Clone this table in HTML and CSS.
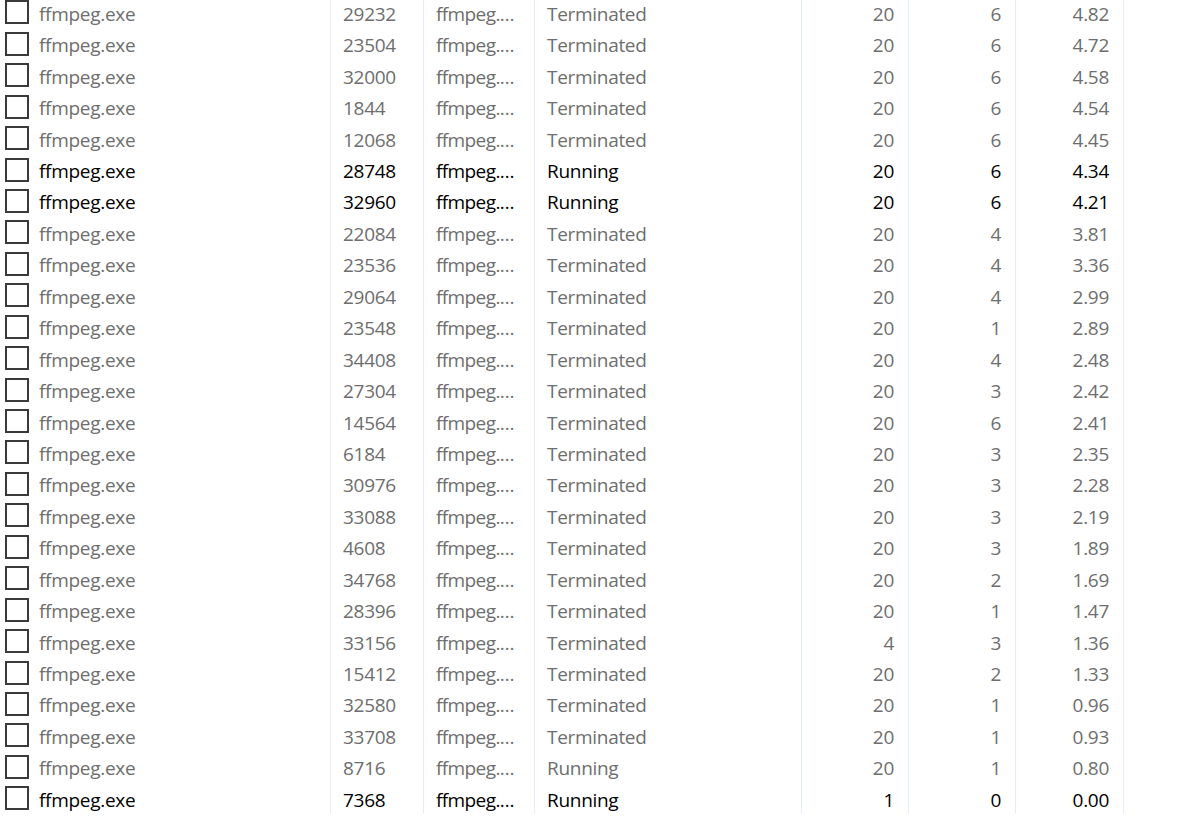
FILE: index.html
```html
<!DOCTYPE html>
<html lang="en">
<head>
<meta charset="utf-8">
<title>Processes</title>
<link rel="stylesheet" href="styles.css">
</head>
<body>
<div class="list">
  <div class="row dim"><div class="c name"><span class="box"></span><span>ffmpeg.exe</span></div><div class="c">29232</div><div class="c img">ffmpeg.…</div><div class="c">Terminated</div><div class="c r">20</div><div class="c r">6</div><div class="c r">4.82</div></div>
  <div class="row dim"><div class="c name"><span class="box"></span><span>ffmpeg.exe</span></div><div class="c">23504</div><div class="c img">ffmpeg.…</div><div class="c">Terminated</div><div class="c r">20</div><div class="c r">6</div><div class="c r">4.72</div></div>
  <div class="row dim"><div class="c name"><span class="box"></span><span>ffmpeg.exe</span></div><div class="c">32000</div><div class="c img">ffmpeg.…</div><div class="c">Terminated</div><div class="c r">20</div><div class="c r">6</div><div class="c r">4.58</div></div>
  <div class="row dim"><div class="c name"><span class="box"></span><span>ffmpeg.exe</span></div><div class="c">1844</div><div class="c img">ffmpeg.…</div><div class="c">Terminated</div><div class="c r">20</div><div class="c r">6</div><div class="c r">4.54</div></div>
  <div class="row dim"><div class="c name"><span class="box"></span><span>ffmpeg.exe</span></div><div class="c">12068</div><div class="c img">ffmpeg.…</div><div class="c">Terminated</div><div class="c r">20</div><div class="c r">6</div><div class="c r">4.45</div></div>
  <div class="row"><div class="c name"><span class="box"></span><span>ffmpeg.exe</span></div><div class="c">28748</div><div class="c img">ffmpeg.…</div><div class="c">Running</div><div class="c r">20</div><div class="c r">6</div><div class="c r">4.34</div></div>
  <div class="row"><div class="c name"><span class="box"></span><span>ffmpeg.exe</span></div><div class="c">32960</div><div class="c img">ffmpeg.…</div><div class="c">Running</div><div class="c r">20</div><div class="c r">6</div><div class="c r">4.21</div></div>
  <div class="row dim"><div class="c name"><span class="box"></span><span>ffmpeg.exe</span></div><div class="c">22084</div><div class="c img">ffmpeg.…</div><div class="c">Terminated</div><div class="c r">20</div><div class="c r">4</div><div class="c r">3.81</div></div>
  <div class="row dim"><div class="c name"><span class="box"></span><span>ffmpeg.exe</span></div><div class="c">23536</div><div class="c img">ffmpeg.…</div><div class="c">Terminated</div><div class="c r">20</div><div class="c r">4</div><div class="c r">3.36</div></div>
  <div class="row dim"><div class="c name"><span class="box"></span><span>ffmpeg.exe</span></div><div class="c">29064</div><div class="c img">ffmpeg.…</div><div class="c">Terminated</div><div class="c r">20</div><div class="c r">4</div><div class="c r">2.99</div></div>
  <div class="row dim"><div class="c name"><span class="box"></span><span>ffmpeg.exe</span></div><div class="c">23548</div><div class="c img">ffmpeg.…</div><div class="c">Terminated</div><div class="c r">20</div><div class="c r">1</div><div class="c r">2.89</div></div>
  <div class="row dim"><div class="c name"><span class="box"></span><span>ffmpeg.exe</span></div><div class="c">34408</div><div class="c img">ffmpeg.…</div><div class="c">Terminated</div><div class="c r">20</div><div class="c r">4</div><div class="c r">2.48</div></div>
  <div class="row dim"><div class="c name"><span class="box"></span><span>ffmpeg.exe</span></div><div class="c">27304</div><div class="c img">ffmpeg.…</div><div class="c">Terminated</div><div class="c r">20</div><div class="c r">3</div><div class="c r">2.42</div></div>
  <div class="row dim"><div class="c name"><span class="box"></span><span>ffmpeg.exe</span></div><div class="c">14564</div><div class="c img">ffmpeg.…</div><div class="c">Terminated</div><div class="c r">20</div><div class="c r">6</div><div class="c r">2.41</div></div>
  <div class="row dim"><div class="c name"><span class="box"></span><span>ffmpeg.exe</span></div><div class="c">6184</div><div class="c img">ffmpeg.…</div><div class="c">Terminated</div><div class="c r">20</div><div class="c r">3</div><div class="c r">2.35</div></div>
  <div class="row dim"><div class="c name"><span class="box"></span><span>ffmpeg.exe</span></div><div class="c">30976</div><div class="c img">ffmpeg.…</div><div class="c">Terminated</div><div class="c r">20</div><div class="c r">3</div><div class="c r">2.28</div></div>
  <div class="row dim"><div class="c name"><span class="box"></span><span>ffmpeg.exe</span></div><div class="c">33088</div><div class="c img">ffmpeg.…</div><div class="c">Terminated</div><div class="c r">20</div><div class="c r">3</div><div class="c r">2.19</div></div>
  <div class="row dim"><div class="c name"><span class="box"></span><span>ffmpeg.exe</span></div><div class="c">4608</div><div class="c img">ffmpeg.…</div><div class="c">Terminated</div><div class="c r">20</div><div class="c r">3</div><div class="c r">1.89</div></div>
  <div class="row dim"><div class="c name"><span class="box"></span><span>ffmpeg.exe</span></div><div class="c">34768</div><div class="c img">ffmpeg.…</div><div class="c">Terminated</div><div class="c r">20</div><div class="c r">2</div><div class="c r">1.69</div></div>
  <div class="row dim"><div class="c name"><span class="box"></span><span>ffmpeg.exe</span></div><div class="c">28396</div><div class="c img">ffmpeg.…</div><div class="c">Terminated</div><div class="c r">20</div><div class="c r">1</div><div class="c r">1.47</div></div>
  <div class="row dim"><div class="c name"><span class="box"></span><span>ffmpeg.exe</span></div><div class="c">33156</div><div class="c img">ffmpeg.…</div><div class="c">Terminated</div><div class="c r">4</div><div class="c r">3</div><div class="c r">1.36</div></div>
  <div class="row dim"><div class="c name"><span class="box"></span><span>ffmpeg.exe</span></div><div class="c">15412</div><div class="c img">ffmpeg.…</div><div class="c">Terminated</div><div class="c r">20</div><div class="c r">2</div><div class="c r">1.33</div></div>
  <div class="row dim"><div class="c name"><span class="box"></span><span>ffmpeg.exe</span></div><div class="c">32580</div><div class="c img">ffmpeg.…</div><div class="c">Terminated</div><div class="c r">20</div><div class="c r">1</div><div class="c r">0.96</div></div>
  <div class="row dim"><div class="c name"><span class="box"></span><span>ffmpeg.exe</span></div><div class="c">33708</div><div class="c img">ffmpeg.…</div><div class="c">Terminated</div><div class="c r">20</div><div class="c r">1</div><div class="c r">0.93</div></div>
  <div class="row dim"><div class="c name"><span class="box"></span><span>ffmpeg.exe</span></div><div class="c">8716</div><div class="c img">ffmpeg.…</div><div class="c">Running</div><div class="c r">20</div><div class="c r">1</div><div class="c r">0.80</div></div>
  <div class="row"><div class="c name"><span class="box"></span><span>ffmpeg.exe</span></div><div class="c">7368</div><div class="c img">ffmpeg.…</div><div class="c">Running</div><div class="c r">1</div><div class="c r">0</div><div class="c r">0.00</div></div>
</div>
</body>
</html>
```
FILE: styles.css
```css
html, body {
  margin: 0;
  padding: 0;
  background: #ffffff;
  overflow: hidden;
}
body {
  font-family: "Open Sans", "Noto Sans", "Liberation Sans", sans-serif;
  font-size: 19px;
  color: #000000;
}
.list {
  margin-top: -3.4px;
}
.row {
  display: grid;
  grid-template-columns: 331px 93px 111px 267px 107px 107px 108px;
  height: 31.44px;
  color: #000000;
}
.row.dim {
  color: #6e6e6e;
}
.c {
  display: flex;
  align-items: center;
  padding: 3px 13px 0 12px;
  border-right: 1px solid #e4edf9;
  white-space: nowrap;
  overflow: hidden;
  letter-spacing: -0.3px;
}
.c.img {
  letter-spacing: -0.6px;
}
.c.r {
  justify-content: flex-end;
  padding: 3px 14px 0 0;
}
.c.name {
  padding-left: 5px;
  gap: 10px;
}
.box {
  width: 24px;
  height: 24px;
  margin-top: -3px;
  box-sizing: border-box;
  border: 2px solid #3a3a3a;
  flex: none;
}
```
